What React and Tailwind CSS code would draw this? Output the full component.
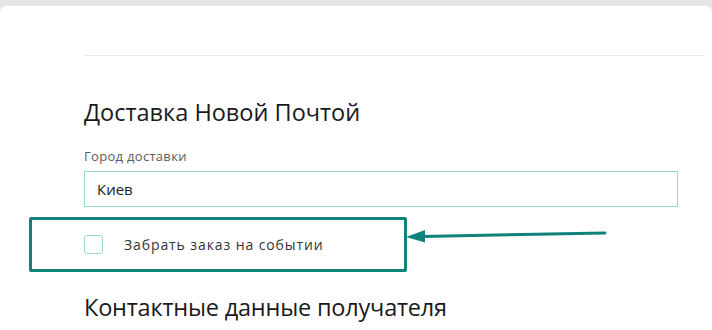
import React from 'react'

export default function App() {
  return (
    <div className="relative w-[712px] h-[330px] overflow-hidden bg-[#e6e6e6] font-['Open_Sans',sans-serif]">
      <div className="mt-[6px] h-full rounded-t-[6px] bg-white pl-[84px] pr-[7px]">
        <div className="pt-[49px] border-b border-[#e3efec]" />

        <h2 className="mt-[41px] text-[23.5px] leading-[30px] text-[#1a1a1a]">Доставка Новой Почтой</h2>

        <label className="mt-[20px] block text-[13px] leading-[18px] tracking-[0.3px] text-[#5b5b5b]">Город доставки</label>
        <div className="mt-[6px] mr-[27px] h-[36px] border-[1.5px] border-[#95dcc6] flex items-center pl-[12px] text-[15px] text-[#222]">
          Киев
        </div>

        <div className="mt-[10px] -ml-[55px] w-[378px] h-[55px] rounded-[2px] border-[3px] border-[#0f827a] flex items-center pl-[52px]">
          <span className="w-[19px] h-[19px] rounded-[3px] border-[1.5px] border-[#95dcc6]" />
          <span className="ml-[21px] text-[14px] tracking-[0.9px] text-[#333]">Забрать заказ на событии</span>
        </div>

        <h2 className="mt-[20px] text-[23.5px] leading-[30px] tracking-[-0.2px] text-[#1a1a1a]">Контактные данные получателя</h2>
      </div>

      <svg className="absolute left-[400px] top-[225px]" width="212" height="20" viewBox="0 0 212 20">
        <line x1="22" y1="11.5" x2="205" y2="8" stroke="#0f827a" strokeWidth="3" strokeLinecap="round" />
        <polygon points="6,12 25,5 25,17.5" fill="#0f827a" />
      </svg>
    </div>
  )
}
